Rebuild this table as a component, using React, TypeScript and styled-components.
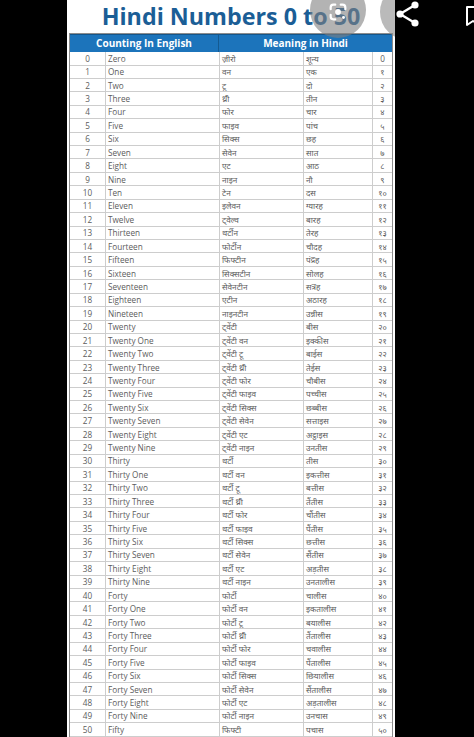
import React from "react";
import styled, { createGlobalStyle } from "styled-components";

const GlobalStyle = createGlobalStyle`
    html, body {
        margin: 0;
        padding: 0;
        background: #000;
    }
    * {
        box-sizing: border-box;
    }
`;

const rows: [string, string, string, string][] = [
    ["Zero", "ज़ीरो", "शून्य", "०"],
    ["One", "वन", "एक", "१"],
    ["Two", "टू", "दो", "२"],
    ["Three", "थ्री", "तीन", "३"],
    ["Four", "फोर", "चार", "४"],
    ["Five", "फाइव", "पांच", "५"],
    ["Six", "सिक्स", "छह", "६"],
    ["Seven", "सेवेन", "सात", "७"],
    ["Eight", "एट", "आठ", "८"],
    ["Nine", "नाइन", "नौ", "९"],
    ["Ten", "टेन", "दस", "१०"],
    ["Eleven", "इलेवन", "ग्यारह", "११"],
    ["Twelve", "ट्वेल्व", "बारह", "१२"],
    ["Thirteen", "थर्टीन", "तेरह", "१३"],
    ["Fourteen", "फोर्टीन", "चौदह", "१४"],
    ["Fifteen", "फिफ्टीन", "पंद्रह", "१५"],
    ["Sixteen", "सिक्सटीन", "सोलह", "१६"],
    ["Seventeen", "सेवेनटीन", "सत्रह", "१७"],
    ["Eighteen", "एटीन", "अठारह", "१८"],
    ["Nineteen", "नाइनटीन", "उन्नीस", "१९"],
    ["Twenty", "ट्वेंटी", "बीस", "२०"],
    ["Twenty One", "ट्वेंटी वन", "इक्कीस", "२१"],
    ["Twenty Two", "ट्वेंटी टू", "बाईस", "२२"],
    ["Twenty Three", "ट्वेंटी थ्री", "तेईस", "२३"],
    ["Twenty Four", "ट्वेंटी फोर", "चौबीस", "२४"],
    ["Twenty Five", "ट्वेंटी फाइव", "पच्चीस", "२५"],
    ["Twenty Six", "ट्वेंटी सिक्स", "छब्बीस", "२६"],
    ["Twenty Seven", "ट्वेंटी सेवेन", "सत्ताइस", "२७"],
    ["Twenty Eight", "ट्वेंटी एट", "अट्ठाइस", "२८"],
    ["Twenty Nine", "ट्वेंटी नाइन", "उनतीस", "२९"],
    ["Thirty", "थर्टी", "तीस", "३०"],
    ["Thirty One", "थर्टी वन", "इकत्तीस", "३१"],
    ["Thirty Two", "थर्टी टू", "बत्तीस", "३२"],
    ["Thirty Three", "थर्टी थ्री", "तैंतीस", "३३"],
    ["Thirty Four", "थर्टी फोर", "चौंतीस", "३४"],
    ["Thirty Five", "थर्टी फाइव", "पैंतीस", "३५"],
    ["Thirty Six", "थर्टी सिक्स", "छत्तीस", "३६"],
    ["Thirty Seven", "थर्टी सेवेन", "सैंतीस", "३७"],
    ["Thirty Eight", "थर्टी एट", "अड़तीस", "३८"],
    ["Thirty Nine", "थर्टी नाइन", "उनतालीस", "३९"],
    ["Forty", "फोर्टी", "चालीस", "४०"],
    ["Forty One", "फोर्टी वन", "इकतालीस", "४१"],
    ["Forty Two", "फोर्टी टू", "बयालीस", "४२"],
    ["Forty Three", "फोर्टी थ्री", "तैंतालीस", "४३"],
    ["Forty Four", "फोर्टी फोर", "चवालीस", "४४"],
    ["Forty Five", "फोर्टी फाइव", "पैंतालीस", "४५"],
    ["Forty Six", "फोर्टी सिक्स", "छियालीस", "४६"],
    ["Forty Seven", "फोर्टी सेवेन", "सैंतालीस", "४७"],
    ["Forty Eight", "फोर्टी एट", "अड़तालीस", "४८"],
    ["Forty Nine", "फोर्टी नाइन", "उनचास", "४९"],
    ["Fifty", "फिफ्टी", "पचास", "५०"],
];

const SScreen = styled.div`
    position: relative;
    width: 474px;
    height: 737px;
    overflow: hidden;
    background: #000;
`;

const SSheet = styled.div`
    position: relative;
    width: 328px;
    height: 100%;
    margin-left: 67px;
    padding: 0 2px;
    background: #fff;
    overflow: hidden;
`;

const STitle = styled.div`
    height: 32.5px;
    line-height: 32px;
    text-align: center;
    font-family: "Open Sans", "Noto Sans", sans-serif;
    font-size: 23.3px;
    font-weight: 700;
    color: #1b5e96;
    white-space: nowrap;
`;

const STable = styled.div`
    border: 1px solid #8c8c8c;
    border-bottom: none;
`;

const SHeadRow = styled.div`
    display: grid;
    grid-template-columns: 149px 1fr;
    height: 18.6px;
    background: #1c74bb;
    border-top: 1px solid #15568a;
`;

const SHeadCell = styled.div<{ $last?: boolean }>`
    display: flex;
    align-items: center;
    justify-content: center;
    font-family: "Open Sans", "Noto Sans", sans-serif;
    font-size: 10px;
    font-weight: 700;
    color: #fff;
    border-right: ${(p) => (p.$last ? "none" : "1px solid #145a91")};
`;

const SRow = styled.div`
    display: grid;
    grid-template-columns: 36px 114px 84px 69px 1fr;
    height: 13.43px;
    border-bottom: 1px solid #cdcdcd;
    background: #fff;
`;

const SCell = styled.div<{ $align?: "center" | "left"; $last?: boolean }>`
    display: flex;
    align-items: center;
    justify-content: ${(p) => (p.$align === "center" ? "center" : "flex-start")};
    padding-left: ${(p) => (p.$align === "center" ? "0" : "2px")};
    overflow: hidden;
    white-space: nowrap;
    font-family: "Open Sans", "Noto Sans", "Noto Sans Devanagari", "Lohit Devanagari", "FreeSans", sans-serif;
    font-size: 8.2px;
    color: #5c5c5c;
    border-right: ${(p) => (p.$last ? "none" : "1px solid #cdcdcd")};
`;

const SLensBubble = styled.div`
    position: absolute;
    left: 243px;
    top: -18px;
    width: 56px;
    height: 56px;
    border-radius: 50%;
    background: rgba(128, 128, 128, 0.6);
    display: flex;
    align-items: flex-end;
    justify-content: center;
    padding-bottom: 15px;
`;

const SShareBubble = styled.div`
    position: absolute;
    left: 313px;
    top: -16px;
    width: 56px;
    height: 56px;
    border-radius: 50%;
    background: rgba(140, 140, 140, 0.6);
`;

const SShareIcon = styled.div`
    position: absolute;
    left: 395px;
    top: 1px;
    width: 26px;
    height: 26px;
`;

const SBookmark = styled.div`
    position: absolute;
    left: 465px;
    top: 5px;
    width: 16px;
    height: 22px;
`;

const LensIcon = () => (
    <svg width="22" height="22" viewBox="0 0 24 24" fill="none">
        <path d="M4 9V7a3 3 0 0 1 3-3h2" stroke="#fff" strokeWidth="2.4" strokeLinecap="round" />
        <path d="M15 4h2a3 3 0 0 1 3 3v2" stroke="#fff" strokeWidth="2.4" strokeLinecap="round" />
        <path d="M4 15v2a3 3 0 0 0 3 3h2" stroke="#fff" strokeWidth="2.4" strokeLinecap="round" />
        <circle cx="12" cy="12" r="3.2" fill="#fff" />
        <circle cx="18" cy="18" r="1.6" fill="#fff" />
    </svg>
);

const ShareIcon = () => (
    <svg width="26" height="26" viewBox="0 0 26 26" fill="none">
        <line x1="5" y1="13" x2="20" y2="4" stroke="#fff" strokeWidth="2.4" />
        <line x1="5" y1="13" x2="20" y2="22" stroke="#fff" strokeWidth="2.4" />
        <circle cx="20" cy="4" r="3.6" fill="#fff" />
        <circle cx="5" cy="13" r="3.6" fill="#fff" />
        <circle cx="20" cy="22" r="3.6" fill="#fff" />
    </svg>
);

const BookmarkIcon = () => (
    <svg width="16" height="22" viewBox="0 0 16 22" fill="none">
        <path d="M2 2h12v18l-6-4-6 4z" stroke="#fff" strokeWidth="2" strokeLinejoin="round" />
    </svg>
);

const App = () => {
    return (
        <>
            <GlobalStyle />
            <SScreen>
                <SSheet>
                    <STitle>Hindi Numbers 0 to 50</STitle>
                    <STable>
                        <SHeadRow>
                            <SHeadCell>Counting In English</SHeadCell>
                            <SHeadCell $last>Meaning in Hindi</SHeadCell>
                        </SHeadRow>
                        {rows.map(([english, sound, hindi, numeral], i) => (
                            <SRow key={english}>
                                <SCell $align="center">{i}</SCell>
                                <SCell>{english}</SCell>
                                <SCell>{sound}</SCell>
                                <SCell>{hindi}</SCell>
                                <SCell $align="center" $last>
                                    {i === 0 ? "0" : numeral}
                                </SCell>
                            </SRow>
                        ))}
                    </STable>
                    <SLensBubble>
                        <LensIcon />
                    </SLensBubble>
                    <SShareBubble />
                </SSheet>
                <SShareIcon>
                    <ShareIcon />
                </SShareIcon>
                <SBookmark>
                    <BookmarkIcon />
                </SBookmark>
            </SScreen>
        </>
    );
};

export default App;
